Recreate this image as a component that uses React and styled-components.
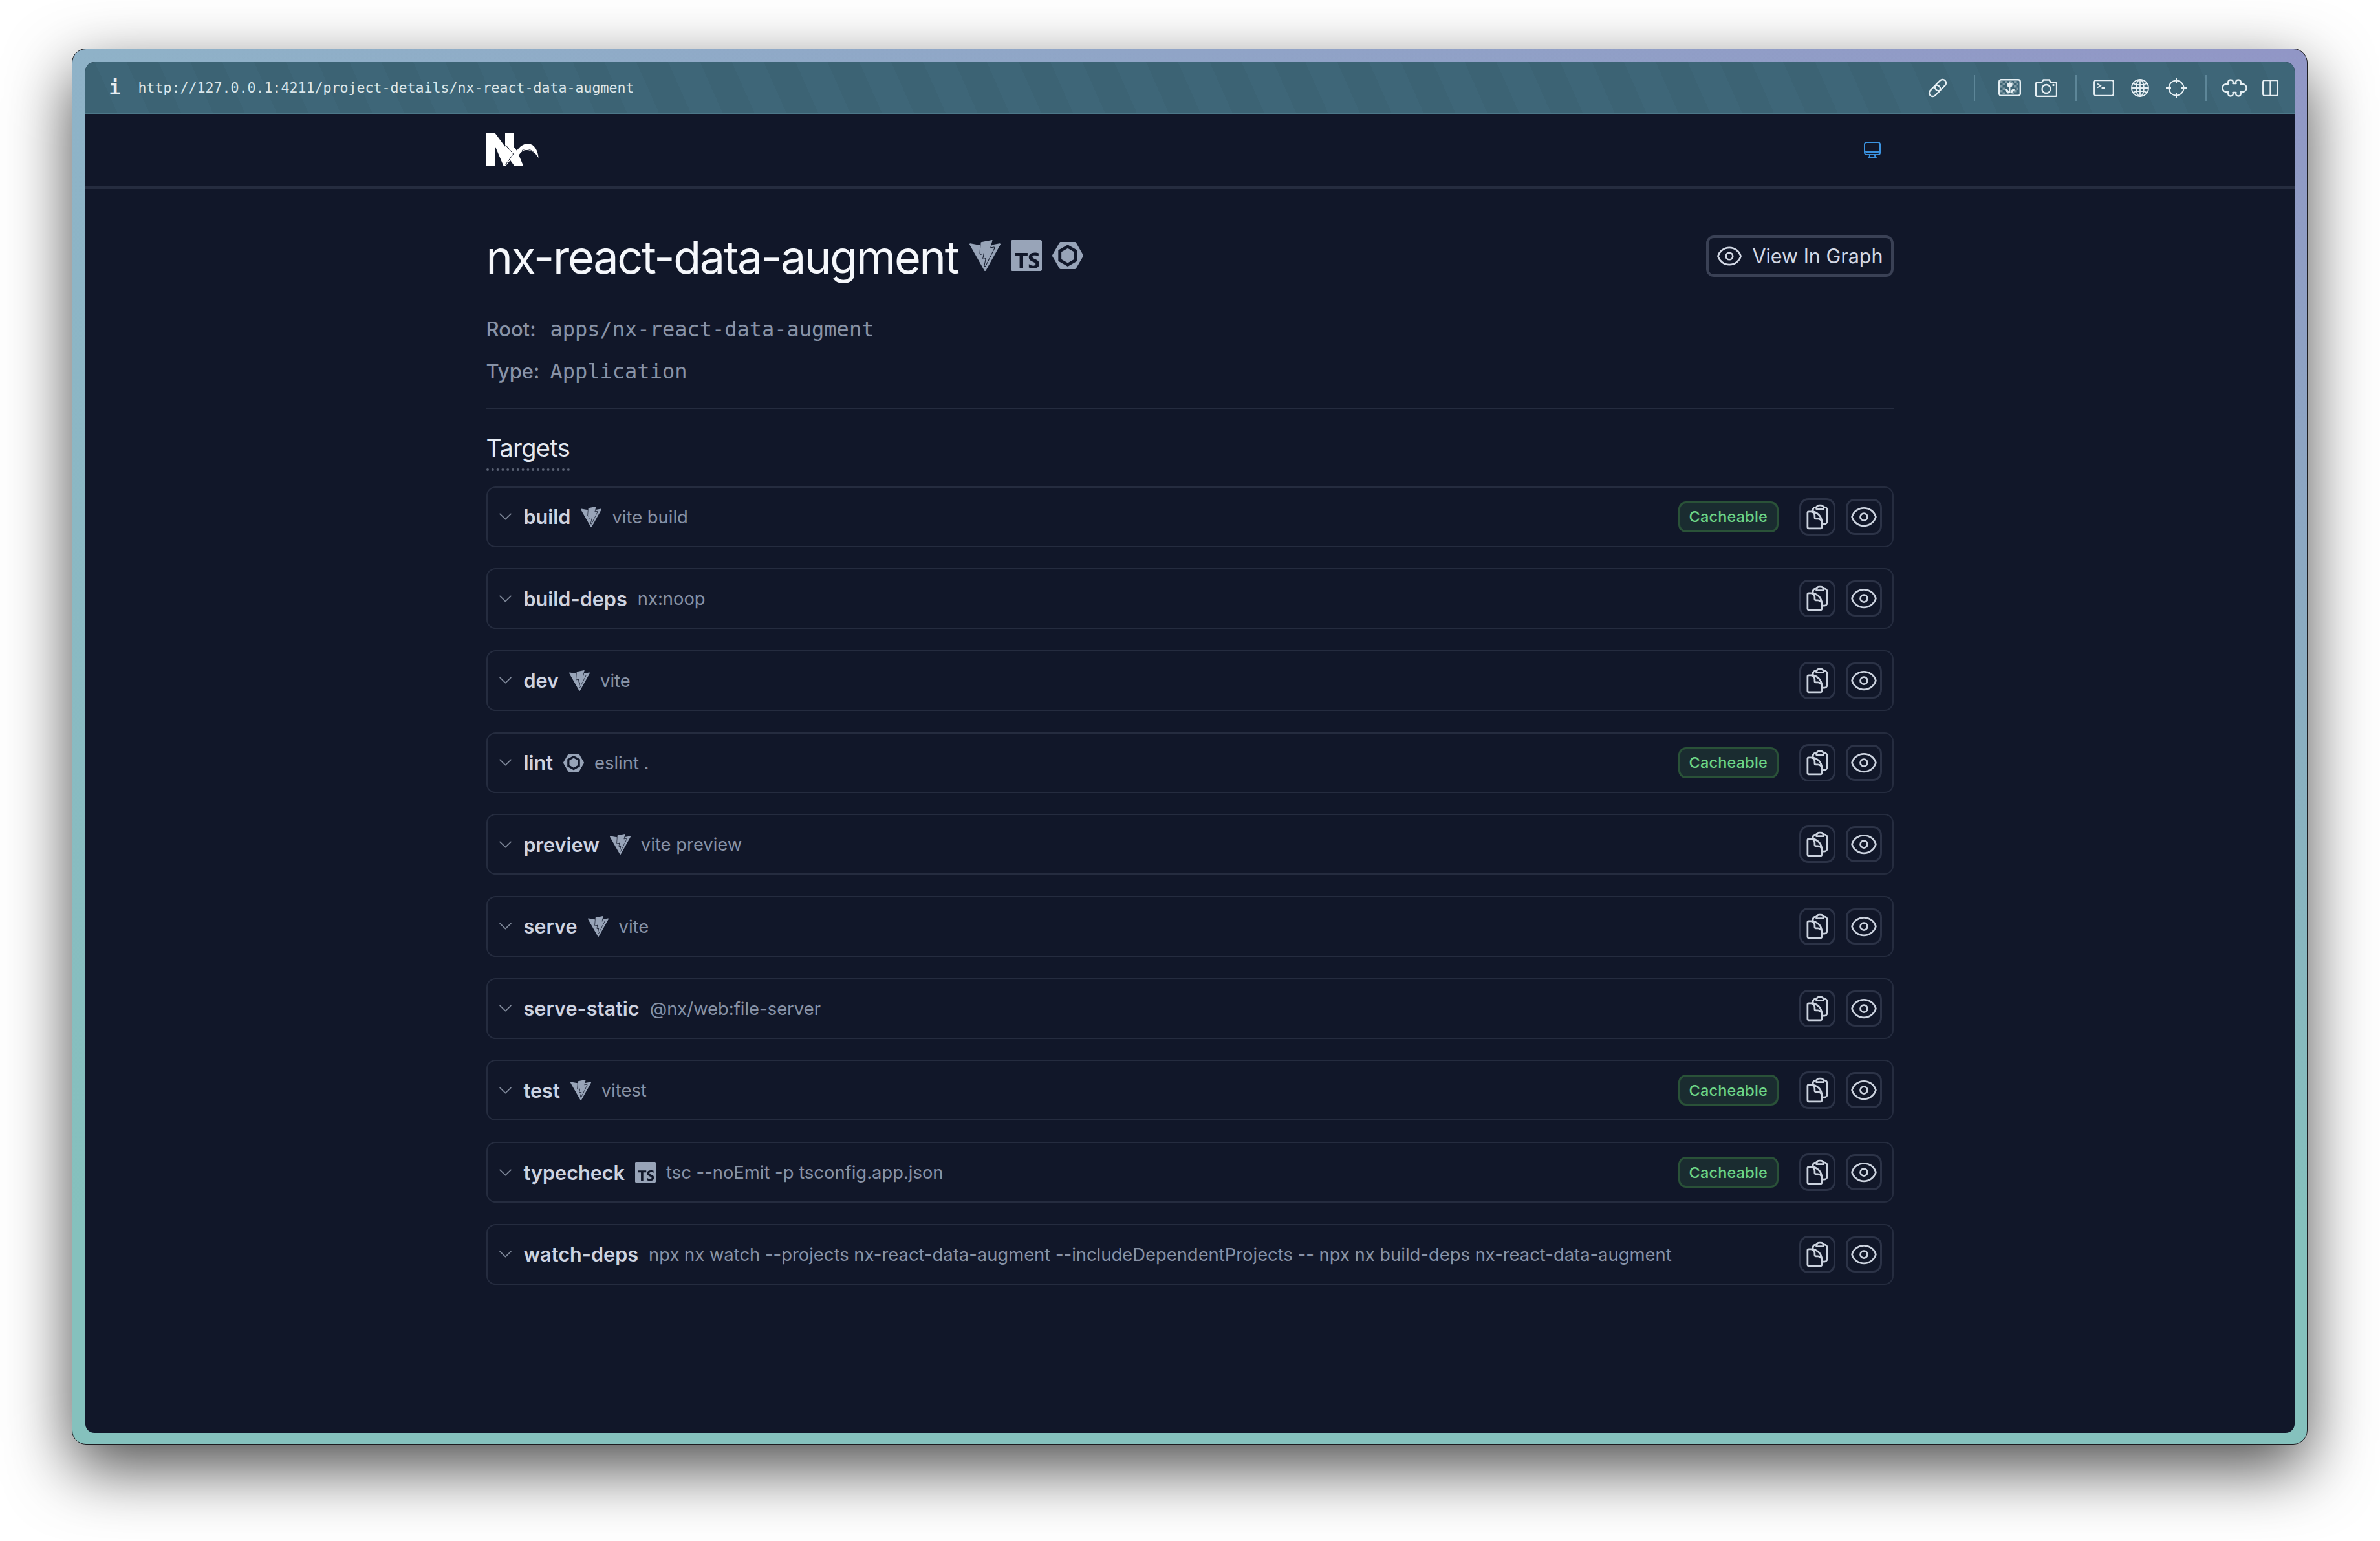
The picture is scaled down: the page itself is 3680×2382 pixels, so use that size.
import React from 'react';
import styled, { createGlobalStyle } from 'styled-components';
import { SiVite, SiTypescript, SiEslint } from 'react-icons/si';
import {
  HiOutlineClipboardDocument,
  HiOutlineEye,
  HiOutlineComputerDesktop,
  HiOutlineChevronDown,
} from 'react-icons/hi2';

const GlobalStyle = createGlobalStyle`
  html {
    overflow: hidden;
    background: #fff;
  }
  body {
    margin: 0;
    padding: 75px 0 149px 111px;
    background: #fff;
  }
  * {
    box-sizing: border-box;
  }
`;

const Frame = styled.div`
  width: 3457px;
  height: 2158px;
  padding: 19.5px 19.5px 17.5px;
  border: 1.5px solid #1c1c20;
  border-radius: 22px;
  background:
    linear-gradient(180deg, rgba(133, 193, 189, 0) 0%, #85c1bd 85%),
    linear-gradient(90deg, #8fb2c8, #9196c6);
  box-shadow: 0 36px 100px rgba(0, 0, 0, 0.7);
`;

const Inner = styled.div`
  display: flex;
  flex-direction: column;
  height: 100%;
  border-radius: 14px;
  overflow: hidden;
  background: #111729;
  font-family: Inter, 'Liberation Sans', sans-serif;
`;

const Toolbar = styled.div`
  display: flex;
  align-items: center;
  flex: none;
  height: 80px;
  padding: 2px 9px 0 37px;
  border-bottom: 2px solid #4d7889;
  background: repeating-linear-gradient(66deg, #3c6374 0 45px, #3e6678 45px 90px);
`;

const InfoGlyph = styled.span`
  width: 13px;
  margin-right: 32px;
  font: bold 30px 'DejaVu Sans Mono', monospace;
  color: #e6eef2;
  text-align: center;
`;

const Url = styled.span`
  flex: 1;
  font: 21.6px 'DejaVu Sans Mono', monospace;
  color: #dbe6ea;
`;

const ToolIcon = styled.span`
  display: flex;
  align-items: center;
  justify-content: center;
  width: 56px;
  height: 40px;
  color: #e6eff3;
`;

const ToolSep = styled.span`
  width: 2px;
  height: 40px;
  margin: 0 ${(p) => p.$right}px 0 ${(p) => p.$left}px;
  background: #5d8698;
`;

const Nav = styled.nav`
  display: flex;
  align-items: center;
  justify-content: space-between;
  flex: none;
  height: 116px;
  border-bottom: 4px solid #252c3f;
  padding: 0 620px;
`;

const DesktopIcon = styled(HiOutlineComputerDesktop)`
  width: 32px;
  height: 32px;
  margin-right: 17px;
  color: #3b93e0;
`;

const Main = styled.main`
  width: 2176px;
  margin: 0 auto;
`;

const Header = styled.header`
  display: flex;
  align-items: center;
  justify-content: space-between;
  padding-top: 68px;
`;

const TitleRow = styled.div`
  display: flex;
  align-items: center;
`;

const Title = styled.h1`
  margin: 0 18px 0 0;
  font-size: 70px;
  line-height: 76px;
  font-weight: 400;
  letter-spacing: -0.032em;
  color: #f5f7fb;
`;

const TitleIcons = styled.div`
  display: flex;
  gap: 16px;
  margin-top: -6px;
  color: #98a4b8;
  font-size: 48px;
`;

const GraphButton = styled.button`
  display: flex;
  align-items: center;
  gap: 14px;
  height: 64px;
  margin-top: -4px;
  padding: 0 12px 0 11px;
  border: 4px solid #3a4155;
  border-radius: 12px;
  background: transparent;
  font-family: inherit;
  font-size: 30.5px;
  color: #d3d9e5;

  svg {
    width: 42px;
    height: 42px;
  }
`;

const Meta = styled.div`
  margin-top: 40px;
  padding-bottom: 24px;
  border-bottom: 2px solid #252c3f;
`;

const MetaLine = styled.div`
  display: flex;
  align-items: baseline;
  height: 65px;
  line-height: 65px;
  font-size: 31px;
  font-weight: 500;
  color: #8893a7;
`;

const MetaLabel = styled.span`
  width: 99px;
`;

const MetaValue = styled.span`
  font: 32px 'DejaVu Sans Mono', monospace;
  color: #8893a7;
`;

const Targets = styled.h2`
  display: inline-block;
  margin: 36px 0 24px;
  padding-bottom: 8px;
  border-bottom: 4px dotted #5a6274;
  font-size: 38px;
  line-height: 48px;
  font-weight: 400;
  letter-spacing: -0.018em;
  color: #e4e9f1;
`;

const TargetList = styled.div`
  display: flex;
  flex-direction: column;
  gap: 32.7px;
`;

const Row = styled.div`
  display: flex;
  align-items: center;
  gap: 16px;
  height: 94px;
  padding: 0 16px 0 14px;
  border: 2px solid #252c3f;
  border-radius: 14px;
`;

const Chevron = styled(HiOutlineChevronDown)`
  width: 27px;
  height: 27px;
  margin-right: -1px;
  color: #7f8899;
`;

const TargetName = styled.span`
  font-size: 30.6px;
  font-weight: 600;
  color: #cdd3e0;
`;

const TargetIcon = styled.span`
  display: flex;
  font-size: 32px;
  color: #98a4b8;
`;

const Command = styled.span`
  flex: 1;
  font-size: 27.4px;
  color: #8792a6;
`;

const Badge = styled.span`
  display: flex;
  align-items: center;
  height: 48px;
  margin-right: 16px;
  padding: 0 13.5px;
  border: 3px solid #2a5238;
  border-radius: 12px;
  background: #1a2c30;
  font-size: 23.4px;
  font-weight: 500;
  letter-spacing: 0.01em;
  color: #6cd586;
`;

const IconButton = styled.button`
  display: flex;
  align-items: center;
  justify-content: center;
  flex: none;
  width: 56px;
  height: ${(p) => p.$height}px;
  padding: 0;
  border: 3px solid #2c3347;
  border-radius: 14px;
  background: transparent;
  color: #ccd3df;

  svg {
    width: 44px;
    height: 44px;
    flex: none;
  }
`;

const Cells = [
  [3, 3], [10, 3], [17, 3], [24, 3],
  [6.5, 6.5], [13.5, 6.5], [20.5, 6.5], [27.5, 6.5],
  [3, 10], [24, 10], [6.5, 13.5], [27.5, 13.5],
  [3, 17], [24, 17], [6.5, 20.5], [13.5, 20.5], [20.5, 20.5],
];

function LinkIcon() {
  return (
    <svg width="36" height="36" viewBox="0 0 40 40" fill="none" stroke="currentColor" strokeWidth="2.6">
      <g transform="rotate(-45 20 20)">
        <rect x="2" y="14" width="22" height="12" rx="6" />
        <rect x="16" y="14" width="22" height="12" rx="6" />
      </g>
    </svg>
  );
}

function FlowerIcon() {
  return (
    <svg width="35" height="27" viewBox="0 0 35 27" fill="none">
      {Cells.map(([x, y]) => (
        <rect key={`${x}-${y}`} x={x} y={y} width="3.5" height="3.5" fill="#e6eff3" opacity="0.4" />
      ))}
      <rect x="1.2" y="1.2" width="32.6" height="24.6" rx="3" stroke="currentColor" strokeWidth="2.4" />
      <path d="M13.5 5 L15.5 7 L17.5 5 L19.5 7 L21.5 5 V10 C21.5 12 19.5 13 17.5 13 C15.5 13 13.5 12 13.5 10 Z" fill="currentColor" />
      <path d="M17.5 13 V22" stroke="currentColor" strokeWidth="1.8" />
      <path d="M10 15 C13 15 16.5 17.5 16.5 21.5 C13 21.5 10 19 10 15 Z M25 15 C22 15 18.5 17.5 18.5 21.5 C22 21.5 25 19 25 15 Z" fill="currentColor" />
    </svg>
  );
}

function CameraIcon() {
  return (
    <svg width="34" height="28" viewBox="0 0 34 28" fill="none" stroke="currentColor" strokeWidth="2.3">
      <path d="M3 5.5 H10 L12.5 1.5 H21.5 L24 5.5 H31 C32 5.5 33 6.5 33 7.5 V25 C33 26 32 27 31 27 H3 C2 27 1 26 1 25 V7.5 C1 6.5 2 5.5 3 5.5 Z" />
      <circle cx="17" cy="15.5" r="6.5" />
      <circle cx="28" cy="9.5" r="0.6" />
    </svg>
  );
}

function TerminalIcon() {
  return (
    <svg width="32" height="26" viewBox="0 0 32 26" fill="none" stroke="currentColor" strokeWidth="2.2">
      <rect x="1.2" y="1.2" width="29.6" height="23.6" rx="2.5" />
      <path d="M6 6.5 L11 9.5 L6 12.5 M12.5 13 H18" strokeWidth="1.8" />
    </svg>
  );
}

function GlobeIcon() {
  return (
    <svg width="30" height="30" viewBox="0 0 30 30" fill="none" stroke="currentColor" strokeWidth="1.8">
      <circle cx="15" cy="15" r="13" />
      <ellipse cx="15" cy="15" rx="6" ry="13" />
      <path d="M15 2 V28 M4 8 C10 11 20 11 26 8 M2 15 H28 M4 22 C10 19 20 19 26 22" />
    </svg>
  );
}

function TargetIconSvg() {
  return (
    <svg width="34" height="34" viewBox="0 0 34 34" fill="none" stroke="currentColor" strokeWidth="2">
      <circle cx="17" cy="17" r="11.5" />
      <path d="M17 1 V9 M17 25 V33 M1 17 H9 M25 17 H33" />
    </svg>
  );
}

function PuzzleIcon() {
  return (
    <svg width="40" height="28" viewBox="0 0 40 28" fill="none" stroke="currentColor" strokeWidth="2.4" strokeLinejoin="round">
      <path d="M10 8 C9 3 12 1.5 14 1.5 C17 1.5 19 4 17.5 7 H22.5 C21 4 23 1.5 26 1.5 C28 1.5 31 3 30 8 C35 7 38.5 10 38.5 14 C38.5 18 35 21 30 20 C31 25 28 26.5 26 26.5 C23 26.5 21 24 22.5 21 H17.5 C19 24 17 26.5 14 26.5 C12 26.5 9 25 10 20 C5 21 1.5 18 1.5 14 C1.5 10 5 7 10 8 Z" />
    </svg>
  );
}

function SplitIcon() {
  return (
    <svg width="25" height="26" viewBox="0 0 25 26" fill="none" stroke="currentColor" strokeWidth="2.3">
      <rect x="1.2" y="1.2" width="22.6" height="23.6" rx="2.5" />
      <path d="M12.5 1 V25" />
    </svg>
  );
}

function NxLogo() {
  return (
    <svg width="81" height="52" viewBox="21 22 243 156" aria-label="Nx">
      <path
        fill="#fff"
        d="M21 22 H62 L108 84 V22 H148 V84 L162 102 C176 84 195 68 215 70 C244 72 260 102 263 136 L258 130 C250 114 228 100 206 100 C192 100 180 110 172 124 L192 172 H150 L132 147 L112 172 H100 L60 78 V172 H21 Z"
      />
      <path fill="none" stroke="#111729" strokeWidth="3" d="M110 76 L146 118 L110 168" />
      <path fill="none" stroke="#111729" strokeWidth="2.5" d="M186 102 C204 88 234 96 252 124 M190 108 C208 96 228 102 246 122" />
    </svg>
  );
}

const targets = [
  { name: 'build', icon: SiVite, command: 'vite build', cacheable: true },
  { name: 'build-deps', command: 'nx:noop' },
  { name: 'dev', icon: SiVite, command: 'vite' },
  { name: 'lint', icon: SiEslint, command: 'eslint .', cacheable: true },
  { name: 'preview', icon: SiVite, command: 'vite preview' },
  { name: 'serve', icon: SiVite, command: 'vite' },
  { name: 'serve-static', command: '@nx/web:file-server' },
  { name: 'test', icon: SiVite, command: 'vitest', cacheable: true },
  { name: 'typecheck', icon: SiTypescript, command: 'tsc --noEmit -p tsconfig.app.json', cacheable: true },
  {
    name: 'watch-deps',
    command: 'npx nx watch --projects nx-react-data-augment --includeDependentProjects -- npx nx build-deps nx-react-data-augment',
  },
];

function TargetRow({ name, icon: Icon, command, cacheable }) {
  return (
    <Row>
      <Chevron />
      <TargetName>{name}</TargetName>
      {Icon && (
        <TargetIcon>
          <Icon />
        </TargetIcon>
      )}
      <Command>{command}</Command>
      {cacheable && <Badge>Cacheable</Badge>}
      <IconButton $height={58}>
        <HiOutlineClipboardDocument />
      </IconButton>
      <IconButton $height={56}>
        <HiOutlineEye />
      </IconButton>
    </Row>
  );
}

export default function App() {
  return (
    <>
      <GlobalStyle />
      <Frame>
        <Inner>
          <Toolbar>
            <InfoGlyph>i</InfoGlyph>
            <Url>http://127.0.0.1:4211/project-details/nx-react-data-augment</Url>
            <ToolIcon><LinkIcon /></ToolIcon>
            <ToolSep $left={28} $right={26} />
            <ToolIcon><FlowerIcon /></ToolIcon>
            <ToolIcon><CameraIcon /></ToolIcon>
            <ToolSep $left={17} $right={14} />
            <ToolIcon><TerminalIcon /></ToolIcon>
            <ToolIcon><GlobeIcon /></ToolIcon>
            <ToolIcon><TargetIconSvg /></ToolIcon>
            <ToolSep $left={17} $right={15} />
            <ToolIcon><PuzzleIcon /></ToolIcon>
            <ToolIcon><SplitIcon /></ToolIcon>
          </Toolbar>
          <Nav>
            <NxLogo />
            <DesktopIcon />
          </Nav>
          <Main>
            <Header>
              <TitleRow>
                <Title>nx-react-data-augment</Title>
                <TitleIcons>
                  <SiVite />
                  <SiTypescript />
                  <SiEslint />
                </TitleIcons>
              </TitleRow>
              <GraphButton>
                <HiOutlineEye />
                View In Graph
              </GraphButton>
            </Header>
            <Meta>
              <MetaLine><MetaLabel>Root:</MetaLabel><MetaValue>apps/nx-react-data-augment</MetaValue></MetaLine>
              <MetaLine><MetaLabel>Type:</MetaLabel><MetaValue>Application</MetaValue></MetaLine>
            </Meta>
            <Targets>Targets</Targets>
            <TargetList>
              {targets.map((target) => (
                <TargetRow key={target.name} {...target} />
              ))}
            </TargetList>
          </Main>
        </Inner>
      </Frame>
    </>
  );
}
